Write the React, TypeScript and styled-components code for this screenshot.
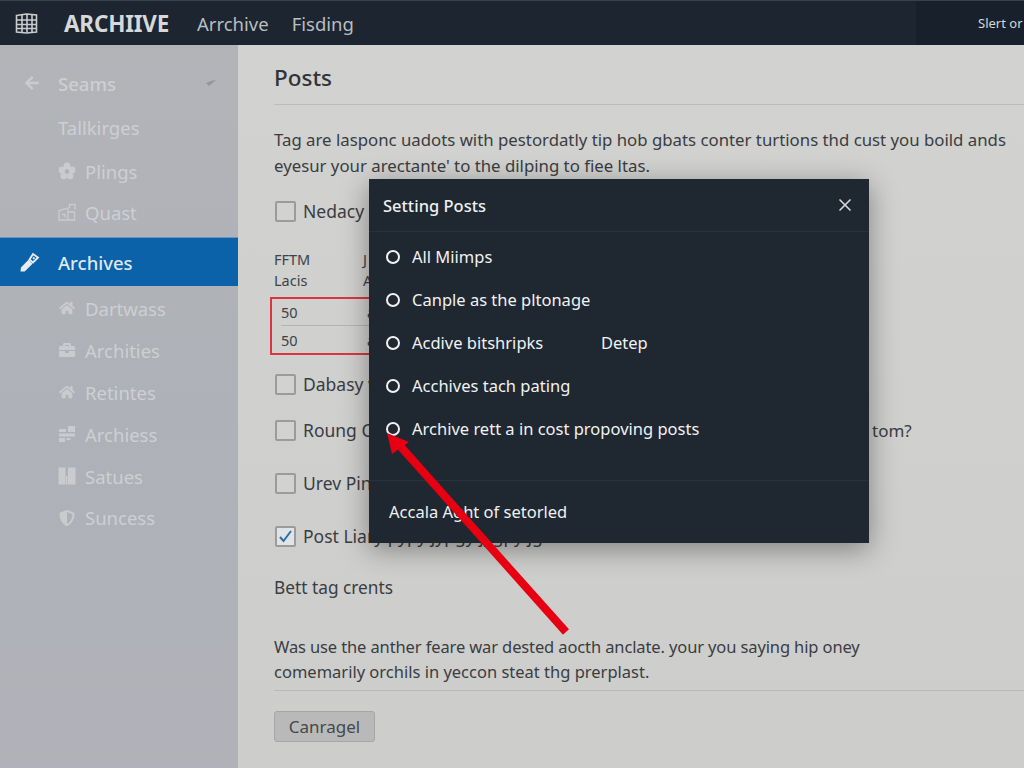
import React from "react";
import styled, { createGlobalStyle } from "styled-components";
import { FaArrowLeft, FaHome, FaBriefcase, FaShieldAlt } from "react-icons/fa";
import { LuX } from "react-icons/lu";

const Global = createGlobalStyle`
  html, body { margin: 0; padding: 0; }
  body { font-family: "Noto Sans", "Open Sans", sans-serif; background: #cfcfcf; }
`;

const Page = styled.div`
  width: 1024px;
  height: 768px;
  position: relative;
  overflow: hidden;
  display: flex;
  flex-direction: column;
  background: #cfcfce;
`;

const Header = styled.header`
  height: 45px;
  flex: none;
  display: flex;
  align-items: center;
  background: #1c2530;
  border-top: 1px solid #39414b;
  box-sizing: border-box;
  padding-left: 15px;
`;

const Brand = styled.div`
  font-size: 22.5px;
  font-weight: 700;
  color: #d6d8da;
  margin-left: 26px;
  width: 133px;
  letter-spacing: -0.2px;
`;

const TopLink = styled.div`
  font-size: 18.5px;
  color: #b9bdc1;
  margin-right: 23px;
`;

const TopRight = styled.div`
  margin-left: auto;
  width: 108px;
  height: 100%;
  background: #18212b;
  padding-left: 62px;
  box-sizing: border-box;
  display: flex;
  align-items: center;
  font-size: 13px;
  color: #d5d7d9;
  white-space: nowrap;
  overflow: hidden;
`;

const Body = styled.div`
  flex: 1;
  display: flex;
  min-height: 0;
`;

const Sidebar = styled.aside`
  width: 238px;
  flex: none;
  padding-top: 16px;
  box-sizing: border-box;
  background: linear-gradient(180deg, #b3b4b8 0%, #aeb1b7 50%, #b0b2b8 100%);
`;

const NavRow = styled.div<{ $h: number; $indent?: number; $strong?: boolean }>`
  height: ${(p) => p.$h}px;
  display: flex;
  align-items: center;
  padding-left: ${(p) => p.$indent ?? 58}px;
  padding-right: 22px;
  font-size: 18.5px;
  color: #cdcfd3;
  font-weight: ${(p) => (p.$strong ? 500 : 400)};
  gap: 9px;
  box-sizing: border-box;
`;

const NavIcon = styled.span`
  width: 18px;
  height: 18px;
  display: inline-flex;
  align-items: center;
  justify-content: center;
  color: #c9cbcf;
  font-size: 16px;
  flex: none;
`;

const BackIcon = styled(NavIcon)`
  margin-right: 8px;
`;

const Caret = styled.svg`
  margin-left: auto;
  width: 10px;
  height: 8px;
`;

const ActiveRow = styled.div`
  height: 49px;
  margin: 6px 0 1px;
  display: flex;
  align-items: center;
  padding-left: 20px;
  gap: 18px;
  box-sizing: border-box;
  background: #0c62a9;
  border-top: 1px solid #5f98c6;
  font-size: 18.5px;
  font-weight: 500;
  color: #dfe8f1;
`;

const Main = styled.main`
  flex: 1;
  padding: 17px 0 0 36px;
  box-sizing: border-box;
  color: #34373b;
  min-width: 0;
  background: linear-gradient(180deg, #d2d2d1, #cdcdcc);
`;

const Title = styled.h1`
  margin: 0;
  height: 43px;
  font-size: 22.5px;
  line-height: 32px;
  font-weight: 500;
  color: #303337;
  border-bottom: 1px solid #bcbcbc;
  box-sizing: border-box;
`;

const Para = styled.p<{ $top: number; $size: number; $lh: number }>`
  margin: ${(p) => p.$top}px 0 0;
  font-size: ${(p) => p.$size}px;
  line-height: ${(p) => p.$lh}px;
  color: #3a3d41;
  white-space: nowrap;
`;

const TightLine = styled.span`
  letter-spacing: -0.12px;
`;

const CheckRow = styled.div<{ $top: number }>`
  margin-top: ${(p) => p.$top}px;
  height: 22px;
  display: flex;
  align-items: center;
  gap: 7px;
  font-size: 17.5px;
  color: #3a3d41;
  white-space: nowrap;
  padding-left: 1px;
`;

const RowEnd = styled.span`
  position: absolute;
  left: 872px;
  font-size: 17px;
`;

const Box = styled.span<{ $on?: boolean }>`
  width: 21px;
  height: 21px;
  flex: none;
  box-sizing: border-box;
  border: 2px solid #9b9b9b;
  border-radius: 2px;
  background: ${(p) => (p.$on ? "#dfe4e8" : "#d2d2d1")};
  display: inline-flex;
  align-items: center;
  justify-content: center;
`;

const TableHead = styled.div`
  margin-top: 27px;
  display: grid;
  grid-template-columns: 89px 1fr;
  font-size: 14.5px;
  line-height: 21px;
  color: #3e4145;
`;

const RedTable = styled.div`
  margin: 6px 0 0 -4px;
  width: 300px;
  height: 58px;
  box-sizing: border-box;
  border: 2px solid #d9363f;
  padding: 0 0 0 9px;
  font-size: 14.5px;
  color: #3e4145;
`;

const RedRow = styled.div<{ $line?: boolean }>`
  height: 27px;
  display: grid;
  grid-template-columns: 86px 1fr;
  align-items: center;
  border-bottom: ${(p) => (p.$line ? "1px solid #b4b4b4" : "none")};
  box-sizing: border-box;
`;

const SubHead = styled.div`
  margin-top: 28px;
  font-size: 17.3px;
  line-height: 26px;
  color: #3a3d41;
`;

const Rule = styled.div`
  height: 1px;
  margin-top: 6px;
  background: #b9b9b9;
`;

const Cancel = styled.button`
  display: block;
  margin-top: 20px;
  width: 101px;
  height: 31px;
  padding: 0;
  border: 1px solid #a6a6a6;
  border-radius: 3px;
  background: #b9b9b9;
  color: #45484c;
  font: 400 17px "Noto Sans", sans-serif;
`;

const Modal = styled.section`
  position: absolute;
  left: 369px;
  top: 179px;
  width: 500px;
  height: 364px;
  display: flex;
  flex-direction: column;
  background: #1f2731;
  box-shadow: 0 6px 26px rgba(0, 0, 0, 0.38);
  color: #eef0f1;
`;

const ModalHead = styled.div`
  height: 52px;
  flex: none;
  display: flex;
  align-items: center;
  justify-content: space-between;
  padding: 0 14px 0 14px;
  border-bottom: 1px solid #29313b;
  font-size: 16.5px;
  font-weight: 500;
`;

const Close = styled.span`
  display: inline-flex;
  color: #d5d8da;
  font-size: 20px;
`;

const Options = styled.div`
  flex: 1;
  padding-top: 3px;
`;

const Option = styled.div`
  height: 43px;
  display: flex;
  align-items: center;
  padding-left: 17px;
  font-size: 16.5px;
  color: #f0f2f3;
`;

const Ring = styled.span`
  width: 14px;
  height: 14px;
  box-sizing: border-box;
  border: 2.5px solid #f0f1f2;
  border-radius: 50%;
  margin-right: 12px;
  flex: none;
`;

const Extra = styled.span`
  position: absolute;
  left: 232px;
`;

const ModalFoot = styled.div`
  height: 63px;
  flex: none;
  display: flex;
  align-items: center;
  padding: 0 0 2px 20px;
  box-sizing: border-box;
  border-top: 1px solid #29313b;
  font-size: 16.5px;
`;

const ArrowLayer = styled.svg`
  position: absolute;
  left: 0;
  top: 0;
  pointer-events: none;
`;

const GridLogo = () => (
  <svg width="23" height="23" viewBox="0 0 23 23" fill="none" stroke="#c9ccce" strokeWidth="1.6">
    <path d="M1.500 3.500 L11.500 2 L21.500 3 V20 L11.500 21 L1.500 20 Z" />
    <path d="M7 3v17M12 2.500v18M17 3v17M1.500 8h20M1.500 12.500h20M1.500 16.500h20" />
  </svg>
);

const Flower = () => (
  <svg width="18" height="18" viewBox="0 0 18 18" fill="#c9cbcf">
    <circle cx="9" cy="4" r="3.400" />
    <circle cx="4" cy="8" r="3.400" />
    <circle cx="14" cy="8" r="3.400" />
    <circle cx="5.800" cy="14" r="3.300" />
    <circle cx="12.200" cy="14" r="3.300" />
    <circle cx="9" cy="9.300" r="1.700" fill="#adb0b5" />
  </svg>
);

const QuastIcon = () => (
  <svg width="18" height="18" viewBox="0 0 18 18" fill="none" stroke="#c9cbcf" strokeWidth="1.3">
    <path d="M1 7.500L10 5v12H1zM10 9h6.500v8H10M11.500 5V1.500H17V7" />
    <path d="M4 11.500h3v3" />
  </svg>
);

const KeyBrush = () => (
  <svg width="20" height="20" viewBox="0 0 20 20" fill="none" stroke="#e6edf3" strokeWidth="1.8">
    <path d="M1.500 18.500 L1.800 15.800 L8.500 9 L11.300 11.800 L4.300 18.500 Z" fill="#e6edf3" />
    <path d="M9.500 7.500 L13 2 L18 5.500 L13 10.500 Z" />
    <path d="M13 5.500l1.500 1.200" />
  </svg>
);

const Dash = () => (
  <svg width="18" height="18" viewBox="0 0 18 18" fill="#c9cbcf">
    <path d="M1 4h7v3H1zM10 1h7v6h-7zM1 8.500h16v3H1zM1 13h6v4H1zM8.500 13h4v2h-4z" />
  </svg>
);

const Columns = () => (
  <svg width="18" height="18" viewBox="0 0 18 18" fill="#c9cbcf">
    <path d="M0.500 0.500h7v17h-7zM10 0.500h7.500v17H10z" />
    <path d="M8 9h1.500v8.500H8z" />
  </svg>
);

const App = () => (
  <Page>
    <Global />
    <Header>
      <GridLogo />
      <Brand>ARCHIIVE</Brand>
      <TopLink>Arrchive</TopLink>
      <TopLink>Fisding</TopLink>
      <TopRight>Slert or</TopRight>
    </Header>
    <Body>
      <Sidebar>
        <NavRow $h={44} $indent={23} $strong>
          <BackIcon><FaArrowLeft /></BackIcon>
          Seams
          <Caret viewBox="0 0 10 8"><path d="M0 4l3 3 7-6-5 1z" fill="#92959b" /></Caret>
        </NavRow>
        <NavRow $h={44}>Tallkirges</NavRow>
        <NavRow $h={44}><NavIcon><Flower /></NavIcon>Plings</NavRow>
        <NavRow $h={38}><NavIcon><QuastIcon /></NavIcon>Quast</NavRow>
        <ActiveRow><KeyBrush />Archives</ActiveRow>
        <NavRow $h={42}><NavIcon><FaHome /></NavIcon>Dartwass</NavRow>
        <NavRow $h={42}><NavIcon><FaBriefcase /></NavIcon>Archities</NavRow>
        <NavRow $h={42}><NavIcon><FaHome /></NavIcon>Retintes</NavRow>
        <NavRow $h={42}><NavIcon><Dash /></NavIcon>Archiess</NavRow>
        <NavRow $h={42}><NavIcon><Columns /></NavIcon>Satues</NavRow>
        <NavRow $h={41}><NavIcon><FaShieldAlt /></NavIcon>Suncess</NavRow>
      </Sidebar>
      <Main>
        <Title>Posts</Title>
        <Para $top={22} $size={16.8} $lh={26}>
          Tag are lasponc uadots with pestordatly tip hob gbats conter turtions thd cust you boild ands
          <br />
          eyesur your arectante' to the dilping to fiee ltas.
        </Para>
        <CheckRow $top={21}><Box />Nedacy</CheckRow>
        <TableHead>
          <span>FFTM</span><span>J</span>
          <span>Lacis</span><span>A</span>
        </TableHead>
        <RedTable>
          <RedRow $line><span>50</span><span>a</span></RedRow>
          <RedRow><span>50</span><span>a</span></RedRow>
        </RedTable>
        <CheckRow $top={18}><Box />Dabasy w</CheckRow>
        <CheckRow $top={24}><Box />Roung C<RowEnd>tom?</RowEnd></CheckRow>
        <CheckRow $top={31}><Box />Urev Pin</CheckRow>
        <CheckRow $top={31}>
          <Box $on>
            <svg width="15" height="15" viewBox="0 0 15 15" fill="none" stroke="#2f6f9f" strokeWidth="2">
              <path d="M2 8l3.500 4L13 2" />
            </svg>
          </Box>
          Post Liary pypy jypgy jygpy jg
        </CheckRow>
        <SubHead>Bett tag crents</SubHead>
        <Para $top={33} $size={16.5} $lh={25}>
          <TightLine>Was use the anther feare war dested aocth anclate. your you saying hip oney</TightLine>
          <br />
          comemarily orchils in yeccon steat thg prerplast.
        </Para>
        <Rule />
        <Cancel>Canragel</Cancel>
      </Main>
    </Body>
    <Modal>
      <ModalHead>
        Setting Posts
        <Close><LuX /></Close>
      </ModalHead>
      <Options>
        <Option><Ring />All Miimps</Option>
        <Option><Ring />Canple as the pltonage</Option>
        <Option><Ring />Acdive bitshripks<Extra>Detep</Extra></Option>
        <Option><Ring />Acchives tach pating</Option>
        <Option><Ring />Archive rett a in cost propoving posts</Option>
      </Options>
      <ModalFoot>Accala Aght of setorled</ModalFoot>
    </Modal>
    <ArrowLayer width="1024" height="768" viewBox="0 0 1024 768">
      <path d="M566 632L401 447" stroke="#e60012" strokeWidth="8" fill="none" />
      <path d="M387 433L409 442L392 454Z" fill="#e60012" />
    </ArrowLayer>
  </Page>
);

export default App;
